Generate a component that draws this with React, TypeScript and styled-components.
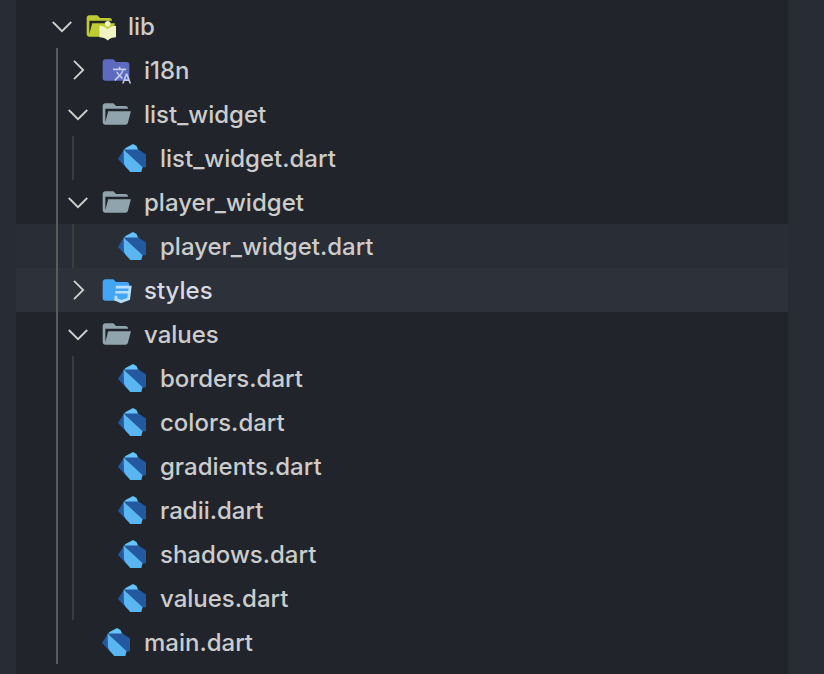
import React, { useState } from "react";
import styled, { createGlobalStyle } from "styled-components";

const GlobalStyle = createGlobalStyle`
  body {
    margin: 0;
    background: #282c34;
    font-family: Inter, "Liberation Sans", sans-serif;
  }
`;

const Sidebar = styled.nav`
  box-sizing: border-box;
  min-height: 100vh;
  margin: 0 36px 0 16px;
  padding: 4px 0;
  background: #21252b;
`;

const Tree = styled.ul`
  margin: 0;
  padding: 0;
  list-style: none;
`;

type RowState = "normal" | "selected" | "hovered";

const rowBackground = { normal: "transparent", selected: "#292d35", hovered: "#2d3139" };

const Row = styled.button<{ $state: RowState }>`
  display: flex;
  align-items: center;
  width: 100%;
  height: 44px;
  padding: 0 0 0 36px;
  border: 0;
  background: ${(p) => rowBackground[p.$state]};
  color: ${(p) => (p.$state === "hovered" ? "#d7dae0" : "#cccccc")};
  font: inherit;
  font-size: 24px;
  font-weight: 500;
  line-height: 32px;
  text-align: left;
  white-space: nowrap;
`;

const Guide = styled.span<{ $strong: boolean }>`
  flex: none;
  box-sizing: border-box;
  width: 12px;
  height: 100%;
  margin-left: 4px;
  border-left: 2px solid ${(p) => (p.$strong ? "#5b5b5b" : "#3c3c3e")};
`;

const Twistie = styled.span`
  display: flex;
  flex: none;
  width: 32px;
`;

const Label = styled.span`
  margin-left: 12px;
  padding-top: 2px;
`;

const Chevron = ({ open }: { open: boolean }) => (
  <svg width="20" height="20" viewBox="0 0 20 20" fill="none" stroke="#d0d0d0" strokeWidth="1.8">
    <path d={open ? "M.8 6 10 15.2 19.2 6" : "M6 .8 15.2 10 6 19.2"} />
  </svg>
);

const CLOSED = "M10 4H4c-1.11 0-2 .89-2 2v12a2 2 0 0 0 2 2h16a2 2 0 0 0 2-2V8c0-1.11-.9-2-2-2h-8l-2-2z";
const OPEN =
  "M19 20H4c-1.11 0-2-.9-2-2V6c0-1.11.89-2 2-2h6l2 2h7a2 2 0 0 1 2 2H4v10l2.14-8h17.07l-2.28 8.5c-.23.87-1.01 1.5-1.93 1.5z";

type IconName = "lib" | "i18n" | "folder" | "styles" | "dart";

const FileIcon = ({ name }: { name: IconName }) => {
  if (name === "dart")
    return (
      <svg width="32" height="32" viewBox="0 0 32 32">
        <path d="M8 8 9.5 6 17 2 20.5 4 22.5 8.5 15 12z" fill="#66c3fa" />
        <path d="M8 7.5 2 17 8.5 24 12 18z" fill="#2459a0" />
        <path d="M8 7.5 22.5 7.5 30 12.5V25.3H25z" fill="#2459a0" />
        <path d="M7.6 7.5 8 21.5 9.3 24.5 14.3 30H25.3L26.6 25.3z" fill="#59b6f0" />
      </svg>
    );
  return (
    <svg width="32" height="32" viewBox="0 0 24 24">
      {name === "folder" && <path d={OPEN} fill="#90a4ae" />}
      {name === "lib" && (
        <>
          <path d={OPEN} fill="#c0ca33" />
          <g fill="#f0f4c3">
            <circle cx="17.8" cy="10.4" r="2.1" />
            <path d="M17.8 14.4c-1.6-1.5-3.8-2.5-6.2-2.5v8.6c2.4 0 4.6.9 6.2 2.4 1.6-1.5 3.8-2.4 6.2-2.4v-8.6c-2.4 0-4.6 1-6.2 2.5z" />
          </g>
        </>
      )}
      {name === "i18n" && (
        <>
          <path d={CLOSED} fill="#5c6bc0" />
          <g transform="translate(9.1 8.4) scale(.62)" fill="#c5cae9">
            <path d="m12.87 15.07-2.54-2.51.03-.03A17.52 17.52 0 0 0 14.07 6H17V4h-7V2H8v2H1v2h11.17C11.5 7.92 10.44 9.75 9 11.35 8.07 10.32 7.3 9.19 6.69 8h-2c.73 1.63 1.73 3.17 2.98 4.56l-5.09 5.02L4 19l5-5 3.11 3.11.76-2.04M18.5 10h-2L12 22h2l1.12-3h4.75L21 22h2l-4.5-12m-2.62 7 1.62-4.33L19.12 17h-3.24z" />
          </g>
        </>
      )}
      {name === "styles" && (
        <>
          <path d={CLOSED} fill="#42a5f5" />
          <g transform="scale(.75)" fill="#bbdefb">
            <path d="M16 11.8H31.7L30 25.8 21 29.2 14.2 26.2 14.7 21.7H17.4L17.1 24.2 21.3 26 27.3 23.9 27.8 19.5H15.2L15.5 16.9H28.3L28.6 14.6H15.7z" />
          </g>
        </>
      )}
    </svg>
  );
};

interface Item {
  name: string;
  icon: IconName;
  open?: boolean;
  state?: RowState;
  children?: Item[];
}

const dart = (name: string, state?: RowState): Item => ({ name: `${name}.dart`, icon: "dart", state });

const root: Item = {
  name: "lib",
  icon: "lib",
  open: true,
  children: [
    { name: "i18n", icon: "i18n", children: [] },
    { name: "list_widget", icon: "folder", open: true, children: [dart("list_widget")] },
    { name: "player_widget", icon: "folder", open: true, children: [dart("player_widget", "selected")] },
    { name: "styles", icon: "styles", state: "hovered", children: [] },
    {
      name: "values",
      icon: "folder",
      open: true,
      children: ["borders", "colors", "gradients", "radii", "shadows", "values"].map((n) => dart(n)),
    },
    dart("main"),
  ],
};

const Node = ({ item, level }: { item: Item; level: number }) => {
  const [open, setOpen] = useState(Boolean(item.open));
  return (
    <li>
      <Row
        type="button"
        $state={item.state ?? "normal"}
        aria-expanded={item.children ? open : undefined}
        onClick={() => setOpen(!open)}
      >
        {Array.from({ length: level }, (_, i) => (
          <Guide key={i} $strong={i === 0} />
        ))}
        <Twistie>{item.children && <Chevron open={open} />}</Twistie>
        <FileIcon name={item.icon} />
        <Label>{item.name}</Label>
      </Row>
      {open && item.children && (
        <Tree>
          {item.children.map((child) => (
            <Node key={child.name} item={child} level={level + 1} />
          ))}
        </Tree>
      )}
    </li>
  );
};

export default function App() {
  return (
    <>
      <GlobalStyle />
      <Sidebar aria-label="Files">
        <Tree>
          <Node item={root} level={0} />
        </Tree>
      </Sidebar>
    </>
  );
}
